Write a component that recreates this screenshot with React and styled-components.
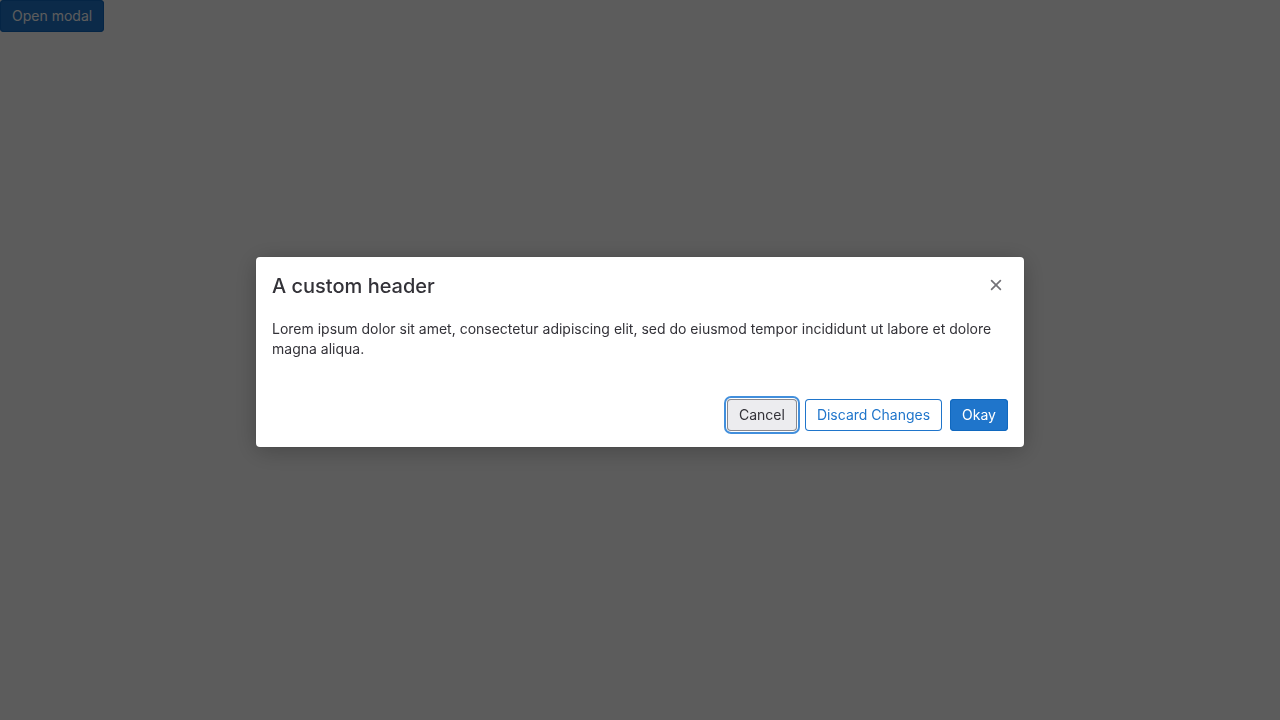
import React from 'react';
import styled, { createGlobalStyle, css } from 'styled-components';

const GlobalStyle = createGlobalStyle`
  *, *::before, *::after { box-sizing: border-box; }
  body {
    margin: 0;
    background: #fff;
    color: #333238;
    font-family: Inter, "Noto Sans", "Liberation Sans", sans-serif;
    font-size: 14px;
    line-height: 20px;
  }
`;

const variants = {
  default: css`
    color: #333238;
    background: #ececef;
    box-shadow: inset 0 0 0 1px #89888d, 0 0 0 1px #fff, 0 0 0 3px #428fdc;
  `,
  outline: css`
    color: #1f75cb;
    background: #fff;
    box-shadow: inset 0 0 0 1px #1f75cb;
  `,
  confirm: css`
    color: #fff;
    background: #1f75cb;
    box-shadow: inset 0 0 0 1px #1068bf;
  `,
};

const Button = styled.button`
  display: inline-flex;
  align-items: center;
  justify-content: center;
  border: 0;
  border-radius: 4px;
  padding: 8px 12px;
  font: inherit;
  line-height: 16px;
  cursor: pointer;
  outline: none;
  ${({ $variant }) => variants[$variant]}
`;

const Backdrop = styled.div`
  position: fixed;
  inset: 0;
  display: flex;
  align-items: center;
  justify-content: center;
  padding-bottom: 16px;
  background: rgba(0, 0, 0, 0.64);
`;

const Dialog = styled.section`
  width: 60%;
  max-width: 768px;
  border-radius: 4px;
  background: #fff;
  box-shadow: 0 4px 24px rgba(0, 0, 0, 0.24), 0 0 2px rgba(0, 0, 0, 0.16);
`;

const Header = styled.header`
  display: flex;
  align-items: flex-start;
  justify-content: space-between;
  padding: 16px 16px 8px;
`;

const Title = styled.h2`
  margin: 0;
  color: #333238;
  font-size: 20px;
  font-weight: 500;
  line-height: 26px;
`;

const CloseButton = styled.button`
  display: flex;
  align-items: center;
  justify-content: center;
  width: 24px;
  height: 24px;
  padding: 0;
  border: 0;
  border-radius: 4px;
  background: transparent;
  color: #737278;
  cursor: pointer;
`;

const Body = styled.div`
  padding: 12px 16px 24px;
`;

const Text = styled.p`
  margin: 0;
`;

const Footer = styled.footer`
  display: flex;
  justify-content: flex-end;
  gap: 8px;
  padding: 16px;
`;

export default function App() {
  return (
    <>
      <GlobalStyle />
      <Button type="button" $variant="confirm">Open modal</Button>
      <Backdrop>
        <Dialog role="dialog" aria-modal="true" aria-labelledby="modal-title">
          <Header>
            <Title id="modal-title">A custom header</Title>
            <CloseButton type="button" aria-label="Close">
              <svg width="16" height="16" viewBox="0 0 16 16" fill="none" stroke="currentColor" strokeWidth="1.7" strokeLinecap="round">
                <path d="M3.6 3.6l8.8 8.8M12.4 3.6l-8.8 8.8" />
              </svg>
            </CloseButton>
          </Header>
          <Body>
            <Text>
              Lorem ipsum dolor sit amet, consectetur adipiscing elit, sed do eiusmod tempor incididunt ut labore et dolore magna aliqua.
            </Text>
          </Body>
          <Footer>
            <Button type="button" $variant="default">Cancel</Button>
            <Button type="button" $variant="outline">Discard Changes</Button>
            <Button type="button" $variant="confirm">Okay</Button>
          </Footer>
        </Dialog>
      </Backdrop>
    </>
  );
}
